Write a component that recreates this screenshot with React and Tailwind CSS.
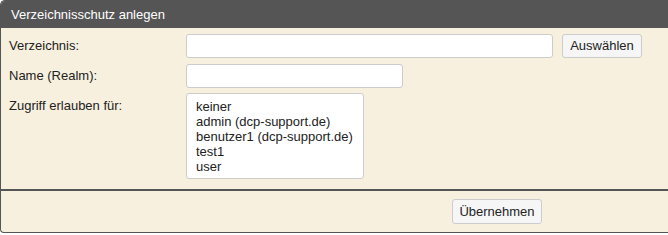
import React from 'react';

const users = ["keiner", "admin (dcp-support.de)", "benutzer1 (dcp-support.de)", "test1", "user"];

function App() {
  return (
    <div className="w-[668px] h-[235px] bg-white text-[13px] text-[#222] font-['Liberation_Sans',Arial,sans-serif]">
      <div className="w-[668px] border border-r-0 border-[#555] rounded-tl-[5px] rounded-bl-[4px] overflow-hidden bg-[#f8f0de]">
        {/* Header */}
        <div className="h-[27px] bg-[#555555] text-white flex items-center pl-[10px]">
          Verzeichnisschutz anlegen
        </div>

        {/* Form rows */}
        <div className="pt-[6px] pb-[10px] flex flex-col gap-[6px]">
          <div className="flex items-center">
            <label className="w-[185px] pl-[8px]">Verzeichnis:</label>
            <input type="text" className="w-[367px] h-[24px] bg-white border border-[#ccc] rounded-[3px]" />
            <button className="ml-[9px] h-[24px] w-[80px] border border-[#ccc] rounded-[3px] bg-[#f6f6f6] text-[#222]">
              Auswählen
            </button>
          </div>
          <div className="flex items-center">
            <label className="w-[185px] pl-[8px]">Name (Realm):</label>
            <input type="text" className="w-[217px] h-[24px] bg-white border border-[#ccc] rounded-[3px]" />
          </div>
          <div className="flex items-start -mt-[1px]">
            <label className="w-[185px] pl-[8px] pt-[5px] leading-[15px]">Zugriff erlauben für:</label>
            <div className="w-[178px] h-[86px] bg-white border border-[#ccc] rounded-[3px] pl-[9px] pt-[5px] leading-[15px]">
              {users.map((u) => (
                <div key={u}>{u}</div>
              ))}
            </div>
          </div>
        </div>

        {/* Footer */}
        <div className="border-t-2 border-[#555] h-[43px] flex items-center pl-[451px]">
          <button className="h-[25px] w-[90px] border border-[#ccc] rounded-[3px] bg-[#f6f6f6] text-[#222]">
            Übernehmen
          </button>
        </div>
      </div>
    </div>
  );
}

export default App;
